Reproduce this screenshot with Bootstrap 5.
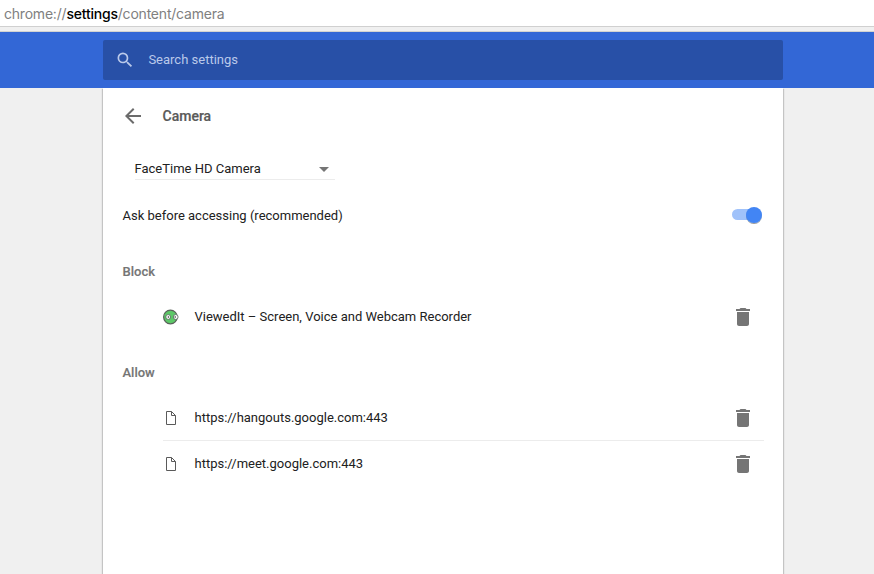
<!DOCTYPE html>
<html lang="en">
<head>
<meta charset="utf-8">
<meta name="viewport" content="width=device-width, initial-scale=1">
<title>Settings – Camera</title>
<link href="https://cdn.jsdelivr.net/npm/bootstrap@5.3.0/dist/css/bootstrap.min.css" rel="stylesheet">
<style>
  body { font-family: Roboto, sans-serif; font-size: 13px; line-height: 20px; color: #212121; background: #f0f0f0; }
  svg { display: block; flex: none; }
  .page { height: 574px; }
  .address { height: 27px; padding: 0 4px; line-height: 27px; font-family: Inter, sans-serif; font-size: 14px; letter-spacing: -.21px; color: #808080; border-bottom: 1px solid #d0d0d0; }
  .address strong { font-weight: 500; color: #000; }
  .chrome-edge { height: 5px; border-bottom: 1px solid #d3d3d1; }
  .toolbar { height: 56px; background: #3367d6; }
  .content-col { width: 680px; margin-left: 103px; }
  .search { height: 40px; padding-left: 12px; background: #2850a7; border-radius: 2px; color: #bac9ea; }
  .search-label { margin-left: 13.4px; }
  .panel { padding: 0 19px 0 20px; box-shadow: 0 2px 1px 1px #c4c4c4; }
  .panel-head { height: 56px; }
  .panel-title { margin-left: 19.5px; font-size: 14px; font-weight: 500; color: #5a5a5a; -webkit-text-stroke: .2px; }
  .camera-select { width: 200px; height: 24px; margin: 12px 0 0 12px; padding-top: 2px; border-bottom: 1px solid #ececec; }
  .caret { margin: 1px 6.5px 0 0; }
  .label { margin-left: -.5px; }
  .ask-row { height: 71px; }
  .toggle { margin-top: -2px; }
  .block-section { margin-top: 11px; }
  .allow-section { margin-top: 24px; }
  .section-title { margin-left: -.5px; font-size: 13px; line-height: 20px; font-weight: 500; color: #757575; -webkit-text-stroke: .15px; }
  .site-list { margin: 12px 0 0 40px; }
  .site { height: 45px; }
  .site + .site { height: 46px; border-top: 1px solid #ececec; }
  .site-icon { margin-right: 16px; }
  .trash { margin-right: 9px; }
</style>
</head>
<body>
<div class="page d-flex flex-column overflow-hidden">
  <div class="address bg-white flex-shrink-0">chrome://<strong>settings</strong>/content/camera</div>
  <div class="chrome-edge flex-shrink-0"></div>
  <header class="toolbar d-flex align-items-center flex-shrink-0">
    <div class="search content-col d-flex align-items-center">
      <svg width="20" height="20" viewBox="0 0 24 24" fill="currentColor"><path d="M15.5 14h-.79l-.28-.27A6.47 6.47 0 0 0 16 9.5 6.5 6.5 0 1 0 9.5 16c1.61 0 3.09-.59 4.23-1.57l.27.28v.79l5 4.99L20.49 19l-4.99-5zm-6 0C7.01 14 5 11.99 5 9.5S7.01 5 9.5 5 14 7.01 14 9.5 11.99 14 9.5 14z"/></svg>
      <span class="search-label">Search settings</span>
    </div>
  </header>
  <main class="panel content-col bg-white flex-grow-1">
    <div class="panel-head d-flex align-items-center">
      <svg width="20" height="24" viewBox="2 0 20 24" fill="#6b6b6b"><path d="M20 11H7.83l5.59-5.59L12 4l-8 8 8 8 1.41-1.41L7.83 13H20v-2z"/></svg>
      <h1 class="panel-title mb-0">Camera</h1>
    </div>
    <div class="camera-select d-flex align-items-center justify-content-between">
      <span class="label">FaceTime HD Camera</span>
      <svg class="caret" width="10" height="5" viewBox="0 0 10 5" fill="#757575"><path d="M0 0h10L5 5z"/></svg>
    </div>
    <div class="ask-row d-flex align-items-center justify-content-between">
      <span class="label">Ask before accessing (recommended)</span>
      <svg class="toggle" width="34" height="22" viewBox="0 0 34 22"><defs><filter id="sh" x="-50%" y="-50%" width="200%" height="200%"><feDropShadow dx="0" dy="1" stdDeviation=".7" flood-opacity=".4"/></filter></defs><rect x="2" y="5" width="28" height="11" rx="5.5" fill="#a0c2fa"/><circle cx="24" cy="11" r="8" fill="#4285f4" filter="url(#sh)"/></svg>
    </div>
    <section class="block-section">
      <h2 class="section-title mb-0">Block</h2>
      <div class="site-list">
        <div class="site d-flex align-items-center">
          <svg class="site-icon" width="16" height="16" viewBox="0 0 16 16"><circle cx="7.4" cy="8" r="6.8" fill="#5cc867" stroke="#596159" stroke-width="1.2"/><circle cx="5.2" cy="8" r="2.4" fill="#fff" stroke="#52665a" stroke-width=".8"/><circle cx="12.7" cy="8" r="2.4" fill="#fff" stroke="#52665a" stroke-width=".8"/><circle cx="5.4" cy="8" r=".8" fill="#333"/><circle cx="12.2" cy="8" r=".8" fill="#333"/></svg>
          <span class="label flex-grow-1">ViewedIt – Screen, Voice and Webcam Recorder</span>
          <svg class="trash" width="24" height="24" viewBox="0 0 24 24" fill="#757575"><path d="M6 19c0 1.1.9 2 2 2h8c1.1 0 2-.9 2-2V7H6v12zM19 4h-3.5l-1-1h-5l-1 1H5v2h14V4z"/></svg>
        </div>
      </div>
    </section>
    <section class="allow-section">
      <h2 class="section-title mb-0">Allow</h2>
      <div class="site-list">
        <div class="site d-flex align-items-center">
          <svg class="site-icon" width="16" height="16" viewBox="0 0 16 16" fill="none" stroke="#5a5a5a"><path d="M3.5 1.5h5l4 4v9h-9zM8.5 1.5v4h4"/></svg>
          <span class="label flex-grow-1">https://hangouts.google.com:443</span>
          <svg class="trash" width="24" height="24" viewBox="0 0 24 24" fill="#757575"><path d="M6 19c0 1.1.9 2 2 2h8c1.1 0 2-.9 2-2V7H6v12zM19 4h-3.5l-1-1h-5l-1 1H5v2h14V4z"/></svg>
        </div>
        <div class="site d-flex align-items-center">
          <svg class="site-icon" width="16" height="16" viewBox="0 0 16 16" fill="none" stroke="#5a5a5a"><path d="M3.5 1.5h5l4 4v9h-9zM8.5 1.5v4h4"/></svg>
          <span class="label flex-grow-1">https://meet.google.com:443</span>
          <svg class="trash" width="24" height="24" viewBox="0 0 24 24" fill="#757575"><path d="M6 19c0 1.1.9 2 2 2h8c1.1 0 2-.9 2-2V7H6v12zM19 4h-3.5l-1-1h-5l-1 1H5v2h14V4z"/></svg>
        </div>
      </div>
    </section>
  </main>
</div>
<script src="https://cdn.jsdelivr.net/npm/bootstrap@5.3.0/dist/js/bootstrap.bundle.min.js"></script>
</body>
</html>
